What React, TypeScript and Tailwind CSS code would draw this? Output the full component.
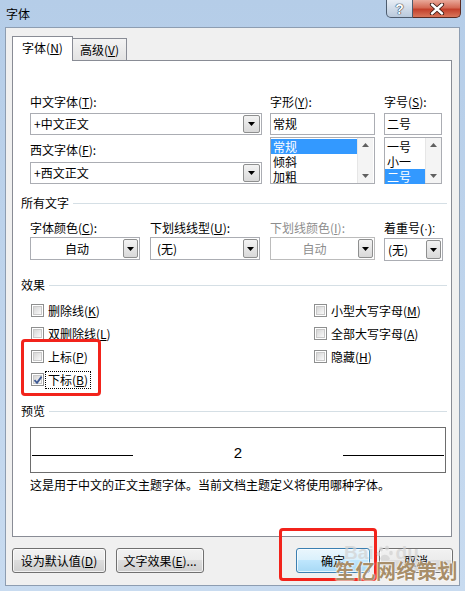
import React from 'react';

function Arrow({ up, color = '#000' }: { up?: boolean; color?: string }) {
  return (
    <svg width="7" height="4" viewBox="0 0 7 4">
      <path d={up ? 'M0 4h7L3.5 0z' : 'M0 0h7L3.5 4z'} fill={color} />
    </svg>
  );
}

function DropButton({ w }: { w: string }) {
  return (
    <div
      className={`my-px mr-px flex ${w} shrink-0 items-center justify-center rounded-[2px] border border-[#8e8f8f] bg-linear-to-b from-[#f3f3f3] to-[#d9d9d9]`}
    >
      <Arrow />
    </div>
  );
}

function Check({ checked }: { checked?: boolean }) {
  return (
    <span className="relative flex h-[13px] w-[13px] shrink-0 items-center justify-center border border-[#8e8f8f] bg-white">
      <span className="h-[9px] w-[9px] border border-[#c9c9c9] bg-linear-to-br from-[#d6d6d6] to-[#fafafa]" />
      {checked && (
        <svg className="absolute left-[1px] top-[1px]" width="10" height="10" viewBox="0 0 10 10">
          <path d="M1.5 5.2 L4 7.8 L8.6 1.6" fill="none" stroke="#3e5a94" strokeWidth="1.8" />
        </svg>
      )}
    </span>
  );
}

function Heading({ children }: { children: React.ReactNode }) {
  return (
    <div className="flex items-center">
      <span>{children}</span>
      <div className="ml-[4px] h-px flex-1 bg-[#d5dfe5]" />
    </div>
  );
}

function ListBox({ items, selected, rowW }: { items: string[]; selected: number; rowW: string }) {
  return (
    <div className="mt-[2px] flex h-[47px] border border-[#abadb3] bg-white">
      <div className={`${rowW} pt-px`}>
        {items.map((t, i) => (
          <div
            key={t}
            className={`h-[15px] pl-[2px] leading-[15px] ${i === selected ? 'bg-[#3399ff] text-white' : ''}`}
          >
            {t}
          </div>
        ))}
      </div>
      <div className="flex w-[16px] flex-col items-center justify-between border-l border-[#e6e6e6] bg-[#f4f4f4] py-[5px]">
        <Arrow up color="#606060" />
        <Arrow color="#606060" />
      </div>
    </div>
  );
}

function Btn({ w, children, primary }: { w: string; children: React.ReactNode; primary?: boolean }) {
  return (
    <div
      className={`flex h-[25px] ${w} items-center justify-center whitespace-nowrap rounded-[3px] border ${
        primary
          ? 'border-[#3c7fb1] bg-[linear-gradient(#eaf6fd,#d9f0fc_50%,#bee6fd_50%,#a7d9f5)]'
          : 'border-[#707070] bg-[linear-gradient(#f2f2f2,#ebebeb_50%,#dddddd_50%,#cfcfcf)]'
      } shadow-[inset_0_0_0_1px_rgba(255,255,255,0.7)]`}
    >
      {children}
    </div>
  );
}

export default function App() {
  return (
    <div className="relative h-[591px] w-[465px] overflow-hidden whitespace-nowrap bg-linear-to-b from-[#b5cde8] to-[#c8dbf0] font-['Noto_Sans_CJK_SC',sans-serif] text-[12px] leading-[16px] text-black">
      {/* Title bar */}
      <div className="flex h-[27px] items-start justify-between">
        <span className="pl-[6px] pt-[6px]">字体</span>
        <div className="mr-[4px] flex">
          <div className="flex h-[18px] w-[27px] items-center justify-center rounded-bl-[5px] border border-t-0 border-[#4d5c6e] bg-linear-to-b from-[#e8eef5] to-[#b9c9dc]">
            <span className="font-['Liberation_Sans',sans-serif] text-[14px] font-bold leading-[14px] text-white [text-shadow:0_0_1px_#27384a,0_0_1px_#27384a,0_0_1px_#27384a]">
              ?
            </span>
          </div>
          <div className="flex h-[18px] w-[48px] items-center justify-center rounded-br-[5px] border border-l-0 border-t-0 border-[#5a2a22] bg-[linear-gradient(#e9a99a,#d46a55_45%,#c3402b_55%,#d9765b)]">
            <svg width="16" height="12" viewBox="0 0 16 12">
              <path d="M3 1.5 L13 10.5 M13 1.5 L3 10.5" stroke="#3a1a14" strokeWidth="4.2" strokeLinecap="round" />
              <path d="M3 1.5 L13 10.5 M13 1.5 L3 10.5" stroke="#ffffff" strokeWidth="2.4" strokeLinecap="round" />
            </svg>
          </div>
        </div>
      </div>

      {/* Dialog body */}
      <div className="mx-[5px] h-[559px] border border-[#8d9db1] bg-[#f0f0f0] px-[6px] pt-[8px]">
        {/* Tabs */}
        <div className="flex h-[24px] items-end">
          <div className="relative z-10 -mb-px flex h-[25px] w-[61px] items-center justify-center border border-b-0 border-[#898c95] bg-white pb-[2px]">
            字体(<u>N</u>)
          </div>
          <div className="flex h-[22px] w-[54px] items-center justify-center border border-b-0 border-l-0 border-[#898c95] bg-linear-to-b from-[#f3f3f3] to-[#e3e3e3]">
            高级(<u>V</u>)
          </div>
        </div>

        {/* Tab panel */}
        <div className="h-[477px] w-[440px] border border-[#898c95] bg-white pl-[8px] pr-[4px] pt-[33px]">
          {/* Font selection */}
          <div className="flex pl-[9px]">
            <div className="w-[232px]">
              <div>
                中文字体(<u>T</u>):
              </div>
              <div className="mt-[3px] flex h-[22px] border border-[#abadb3] bg-white">
                <span className="flex-1 pl-[3px] leading-[20px]">+中文正文</span>
                <DropButton w="w-[17px]" />
              </div>
              <div className="mt-[7px]">
                西文字体(<u>F</u>):
              </div>
              <div className="mt-[4px] flex h-[22px] border border-[#abadb3] bg-white">
                <span className="flex-1 pl-[3px] leading-[20px]">+西文正文</span>
                <DropButton w="w-[17px]" />
              </div>
            </div>
            <div className="ml-[8px] w-[105px]">
              <div>
                字形(<u>Y</u>):
              </div>
              <div className="mt-[3px] h-[22px] border border-[#abadb3] bg-white pl-[2px] leading-[20px]">常规</div>
              <ListBox items={['常规', '倾斜', '加粗']} selected={0} rowW="w-[86px]" />
            </div>
            <div className="ml-[9px] w-[58px]">
              <div>
                字号(<u>S</u>):
              </div>
              <div className="mt-[3px] h-[22px] border border-[#abadb3] bg-white pl-[2px] leading-[20px]">二号</div>
              <ListBox items={['一号', '小一', '二号']} selected={2} rowW="w-[40px]" />
            </div>
          </div>

          {/* All text */}
          <div className="mt-[11px]">
            <Heading>所有文字</Heading>
          </div>
          <div className="mt-[9px] flex pl-[9px]">
            <div className="w-[110px]">
              <div>
                字体颜色(<u>C</u>):
              </div>
              <div className="mt-px flex h-[23px] border border-[#abadb3] bg-white">
                <span className="flex-1 text-center leading-[21px]">自动</span>
                <DropButton w="w-[15px]" />
              </div>
            </div>
            <div className="ml-[10px] w-[110px]">
              <div>
                下划线线型(<u>U</u>):
              </div>
              <div className="mt-px flex h-[23px] border border-[#abadb3] bg-white">
                <span className="flex-1 pl-[6px] leading-[21px]">(无)</span>
                <DropButton w="w-[15px]" />
              </div>
            </div>
            <div className="ml-[10px] w-[105px] text-[#8d8d8d]">
              <div>
                下划线颜色(<u>I</u>):
              </div>
              <div className="mt-px flex h-[23px] border border-[#bcbcbc] bg-white">
                <span className="flex-1 text-center leading-[21px]">自动</span>
                <DropButton w="w-[15px]" />
              </div>
            </div>
            <div className="ml-[9px] w-[59px]">
              <div>
                着重号<span className="font-['Liberation_Sans',sans-serif]">(·):</span>
              </div>
              <div className="mt-px flex h-[23px] border border-[#abadb3] bg-white">
                <span className="flex-1 pl-[3px] leading-[21px]">(无)</span>
                <DropButton w="w-[15px]" />
              </div>
            </div>
          </div>

          {/* Effects */}
          <div className="mt-[16px]">
            <Heading>效果</Heading>
          </div>
          <div className="mt-[6px] flex">
            <div className="w-[293px] pl-[10px]">
              <div className="flex h-[23px] items-center gap-[4px]">
                <Check />
                <span>
                  删除线(<u>K</u>)
                </span>
              </div>
              <div className="flex h-[23px] items-center gap-[4px]">
                <Check />
                <span>
                  双删除线(<u>L</u>)
                </span>
              </div>
              <div className="flex h-[23px] items-center gap-[4px]">
                <Check />
                <span>
                  上标(<u>P</u>)
                </span>
              </div>
              <div className="flex h-[23px] items-center gap-[4px]">
                <Check checked />
                <span className="-ml-[3px] border border-dotted border-black px-[2px]">
                  下标(<u>B</u>)
                </span>
              </div>
            </div>
            <div>
              <div className="flex h-[23px] items-center gap-[4px]">
                <Check />
                <span>
                  小型大写字母(<u>M</u>)
                </span>
              </div>
              <div className="flex h-[23px] items-center gap-[4px]">
                <Check />
                <span>
                  全部大写字母(<u>A</u>)
                </span>
              </div>
              <div className="flex h-[23px] items-center gap-[4px]">
                <Check />
                <span>
                  隐藏(<u>H</u>)
                </span>
              </div>
            </div>
          </div>

          {/* Preview */}
          <div className="mt-[12px]">
            <Heading>预览</Heading>
          </div>
          <div className="ml-[9px] mt-[8px] flex h-[46px] w-[416px] border border-[#6d6d6d]">
            <div className="ml-px mt-[27px] h-px w-[101px] bg-black" />
            <div className="flex-1 pt-[17px] text-center font-['Liberation_Sans',sans-serif] text-[15px] leading-[16px]">
              2
            </div>
            <div className="mr-px mt-[27px] h-px w-[101px] bg-black" />
          </div>
          <div className="mt-[4px] pl-[9px]">这是用于中文的正文主题字体。当前文档主题定义将使用哪种字体。</div>
        </div>

        {/* Buttons */}
        <div className="mt-[11px] flex justify-between">
          <div className="flex gap-[10px]">
            <Btn w="w-[94px]">
              设为默认值(<u>D</u>)
            </Btn>
            <Btn w="w-[88px]">
              文字效果(<u>E</u>)...
            </Btn>
          </div>
          <div className="flex gap-[9px]">
            <Btn w="w-[74px]" primary>
              确定
            </Btn>
            <Btn w="w-[74px]">取消</Btn>
          </div>
        </div>
      </div>

      {/* Annotation marks */}
      <div className="absolute left-[21px] top-[339px] h-[57px] w-[80px] rounded-[4px] border-[3px] border-[#f2231b]" />
      <div className="absolute left-[279px] top-[528px] h-[53px] w-[98px] rounded-[4px] border-[3px] border-[#f2231b]" />

      {/* Watermarks */}
      <div className="absolute left-[344px] top-[543px] flex items-center font-['Liberation_Sans',sans-serif] text-[19px] font-bold leading-[20px] text-[#d2d2d2] opacity-70">
        <span>Bai</span>
        <svg className="mx-[2px]" width="18" height="18" viewBox="0 0 18 18" fill="#d2d2d2">
          <ellipse cx="5" cy="5" rx="2" ry="2.6" />
          <ellipse cx="11" cy="4" rx="2" ry="2.6" />
          <ellipse cx="2.5" cy="10" rx="1.8" ry="2.2" />
          <ellipse cx="15" cy="9" rx="1.8" ry="2.2" />
          <path d="M4 15 C5 10 12 9 14 15 C12 17 6 17 4 15z" />
        </svg>
        <span>du</span>
      </div>
      <div className="absolute left-[335px] top-[559px] text-[20px] font-bold leading-[24px] tracking-[0.5px] text-[#a88e69] [text-shadow:0_0_2px_#fff,0_0_2px_#fff]">
        笙亿网络策划
      </div>
    </div>
  );
}
